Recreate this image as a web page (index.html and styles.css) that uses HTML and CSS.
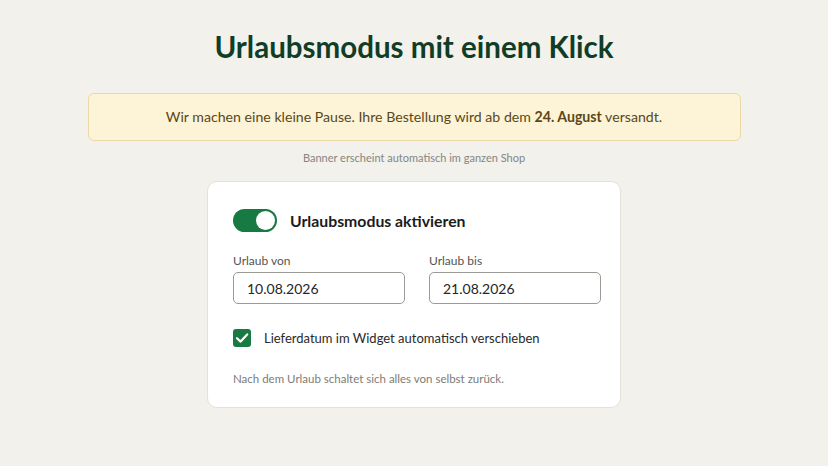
FILE: index.html
```html
<!DOCTYPE html>
<html lang="de">
<head>
<meta charset="utf-8">
<title>Urlaubsmodus</title>
<link rel="stylesheet" href="styles.css">
</head>
<body>
<main class="page">
  <h1 class="title">Urlaubsmodus mit einem Klick</h1>

  <div class="banner">Wir machen eine kleine Pause. Ihre Bestellung wird ab dem <strong>24. August</strong> versandt.</div>
  <p class="banner-note">Banner erscheint automatisch im ganzen Shop</p>

  <section class="card">
    <div class="toggle-row">
      <span class="toggle" role="switch" aria-checked="true"><span class="knob"></span></span>
      <span class="toggle-label">Urlaubsmodus aktivieren</span>
    </div>

    <div class="dates">
      <label class="field">
        <span class="field-label">Urlaub von</span>
        <span class="input">10.08.2026</span>
      </label>
      <label class="field">
        <span class="field-label">Urlaub bis</span>
        <span class="input">21.08.2026</span>
      </label>
    </div>

    <div class="check-row">
      <span class="checkbox">
        <svg viewBox="0 0 18 18" width="18" height="18" aria-hidden="true">
          <path d="M4 9.2 L7.6 12.6 L14.2 5.4" fill="none" stroke="#fff" stroke-width="2.2" stroke-linecap="round" stroke-linejoin="round"/>
        </svg>
      </span>
      <span class="check-label">Lieferdatum im Widget automatisch verschieben</span>
    </div>

    <p class="card-note">Nach dem Urlaub schaltet sich alles von selbst zurück.</p>
  </section>
</main>
</body>
</html>
```

FILE: styles.css
```css
* { box-sizing: border-box; }

html, body {
  margin: 0;
  padding: 0;
  background: #f2f1ec;
  font-family: Lato, "Noto Sans", sans-serif;
}

.page {
  width: 828px;
  height: 466px;
  display: flex;
  flex-direction: column;
  align-items: center;
  padding-top: 28px;
}

.title {
  margin: 0;
  font-size: 29.5px;
  line-height: 38px;
  font-weight: 700;
  color: #113d26;
}

.banner {
  margin-top: 27px;
  width: 653px;
  height: 48px;
  line-height: 46px;
  text-align: center;
  background: #fdf3d7;
  border: 1px solid #ead9a6;
  border-radius: 6px;
  color: #5a4818;
  font-size: 14.15px;
}

.banner strong { font-weight: 700; }

.banner-note {
  margin: 9px 0 0;
  font-size: 11px;
  line-height: 15px;
  color: #86857f;
}

.card {
  margin-top: 16px;
  width: 414px;
  background: #fff;
  border: 1px solid #e4e1d8;
  border-radius: 10px;
  padding: 27px 19px 20px 25px;
}

.toggle-row {
  display: flex;
  align-items: center;
  gap: 13px;
  height: 23px;
}

.toggle {
  width: 44px;
  height: 23px;
  border-radius: 12px;
  background: #177a43;
  display: flex;
  align-items: center;
  justify-content: flex-end;
  padding-right: 2px;
}

.knob {
  width: 19px;
  height: 19px;
  border-radius: 50%;
  background: #fff;
}

.toggle-label {
  font-size: 15.8px;
  line-height: 22px;
  font-weight: 700;
  color: #1c1c1a;
}

.dates {
  margin-top: 21px;
  display: grid;
  grid-template-columns: 172px 172px;
  column-gap: 24px;
}

.field {
  display: flex;
  flex-direction: column;
}

.field-label {
  font-size: 12px;
  line-height: 16px;
  color: #55544f;
}

.input {
  margin-top: 3px;
  height: 32px;
  display: flex;
  align-items: center;
  padding-left: 13px;
  border: 1px solid #9b9a94;
  border-radius: 5px;
  font-size: 14px;
  color: #262624;
}

.check-row {
  margin-top: 24px;
  display: flex;
  align-items: center;
  gap: 13px;
  height: 20px;
}

.checkbox {
  width: 18px;
  height: 18px;
  border-radius: 3px;
  background: #177a43;
  display: flex;
}

.check-label {
  font-size: 13px;
  line-height: 20px;
  color: #2a2a28;
}

.card-note {
  margin: 23px 0 0;
  font-size: 11.5px;
  line-height: 16px;
  color: #7d7c76;
}
```
